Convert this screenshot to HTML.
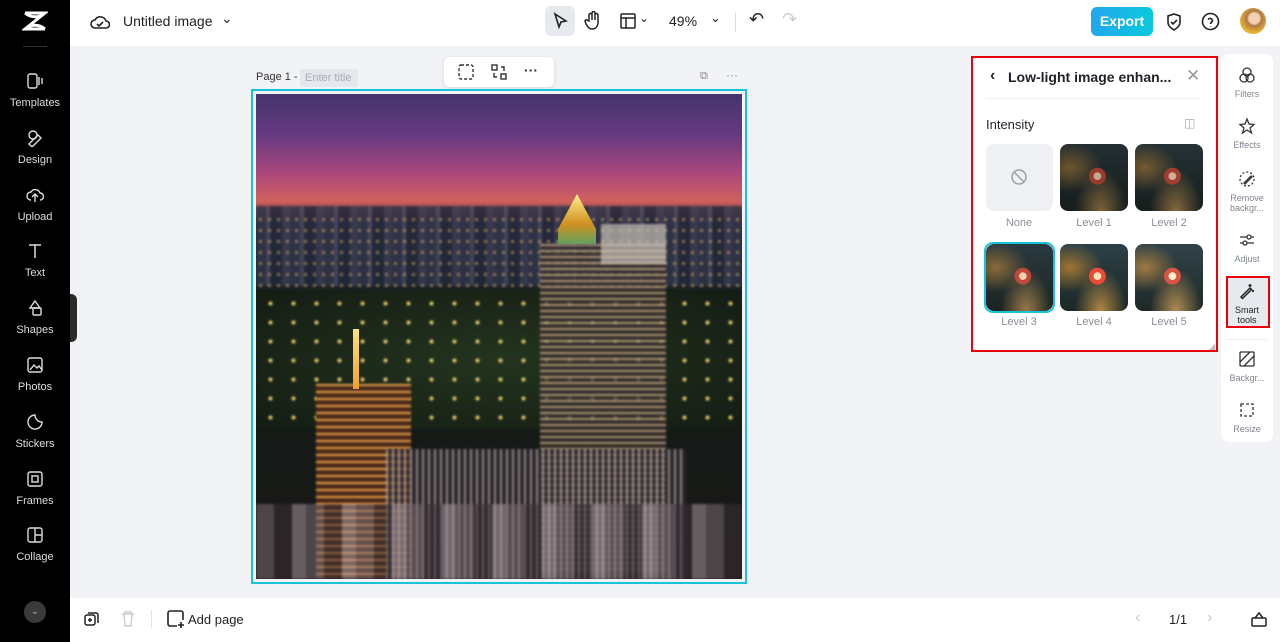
<!DOCTYPE html>
<html><head><meta charset="utf-8"><style>
*{box-sizing:border-box;margin:0;padding:0}
body{width:1280px;height:642px;overflow:hidden;font-family:"Liberation Sans",sans-serif;background:#f1f3f6;position:relative;color:#1f2329}
.abs{position:absolute}
#side{left:0;top:0;width:70px;height:642px;background:#000}
.si{position:absolute;left:0;width:70px;text-align:center;color:#ddd;font-size:11px}
.si svg{display:block;margin:0 auto 7px}
#top{left:70px;top:0;width:1210px;height:46px;background:#fff}
#bot{left:70px;top:598px;width:1210px;height:44px;background:#fff}
.rt{position:absolute;left:0;width:52px;text-align:center;font-size:9px;color:#80868f;line-height:10px}
.rt svg{display:block;margin:0 auto 5px}
.th{position:absolute;width:68px;height:67px;border-radius:8px;overflow:hidden;background:radial-gradient(circle at 55% 48%,#f4d0b0 0 7%,#c0483a 8% 16%,transparent 17%),radial-gradient(ellipse at 15% 35%,#8a6a38 0,transparent 40%),radial-gradient(ellipse at 60% 100%,#9a7a48 0,transparent 45%),linear-gradient(#2b3a40,#1a2422)}
.tl{position:absolute;width:68px;text-align:center;font-size:11px;color:#8a9099}
.bl{position:absolute;filter:blur(1px)}
</style></head><body>
<div id="side" class="abs">
 <svg class="abs" style="left:22px;top:10px" width="26" height="22" viewBox="0 0 26 22"><path d="M3 3h20L3 19h20M3 3c6 5 14 5 20 0M3 19c6-5 14-5 20 0" stroke="#fff" stroke-width="3" fill="none"/></svg>
 <div class="abs" style="left:23px;top:46px;width:24px;height:1px;background:#333"></div>
 <div class="si" style="top:72px"><svg width="18" height="18" viewBox="0 0 18 18" fill="none" stroke="#ddd" stroke-width="1.4"><rect x="2" y="2" width="9" height="14" rx="2"/><path d="M13 5v8M16 6v6"/></svg>Templates</div>
 <div class="si" style="top:129px"><svg width="18" height="18" viewBox="0 0 18 18" fill="none" stroke="#ddd" stroke-width="1.4"><circle cx="7" cy="6" r="4"/><path d="M3 15l9-9 3 3-9 9z"/></svg>Design</div>
 <div class="si" style="top:186px"><svg width="18" height="18" viewBox="0 0 18 18" fill="none" stroke="#ddd" stroke-width="1.4"><path d="M5 14a4 4 0 010-8 5 5 0 019 1 3 3 0 010 7M9 9v7M6 11l3-3 3 3"/></svg>Upload</div>
 <div class="si" style="top:242px"><svg width="18" height="18" viewBox="0 0 18 18" fill="none" stroke="#ddd" stroke-width="1.5"><path d="M3 3h12M9 3v13"/></svg>Text</div>
 <div class="si" style="top:299px"><svg width="18" height="18" viewBox="0 0 18 18" fill="none" stroke="#ddd" stroke-width="1.4"><path d="M9 2l5 7H4z"/><rect x="7" y="9" width="8" height="7" rx="1"/></svg>Shapes</div>
 <div class="si" style="top:356px"><svg width="18" height="18" viewBox="0 0 18 18" fill="none" stroke="#ddd" stroke-width="1.4"><rect x="2" y="2" width="14" height="14" rx="2"/><path d="M4 14l4-5 3 3 2-2 3 4"/></svg>Photos</div>
 <div class="si" style="top:413px"><svg width="18" height="18" viewBox="0 0 18 18" fill="none" stroke="#ddd" stroke-width="1.4"><path d="M16 9A7 7 0 119 2a7 7 0 007 7z"/></svg>Stickers</div>
 <div class="si" style="top:470px"><svg width="18" height="18" viewBox="0 0 18 18" fill="none" stroke="#ddd" stroke-width="1.4"><rect x="2" y="2" width="14" height="14" rx="2"/><rect x="6" y="6" width="6" height="6"/></svg>Frames</div>
 <div class="si" style="top:526px"><svg width="18" height="18" viewBox="0 0 18 18" fill="none" stroke="#ddd" stroke-width="1.4"><rect x="2" y="2" width="14" height="14" rx="2"/><path d="M9 2v14M9 9h7"/></svg>Collage</div>
 <div class="abs" style="left:24px;top:601px;width:22px;height:22px;border-radius:50%;background:#3a3a3a;color:#aaa;font-size:10px;text-align:center;line-height:22px">⌄</div>
</div>
<div class="abs" style="left:70px;top:294px;width:7px;height:48px;background:#2a2a2a;border-radius:0 6px 6px 0"></div>
<div id="top" class="abs">
 <svg class="abs" style="left:20px;top:13px" width="20" height="18" viewBox="0 0 20 18" fill="none" stroke="#222" stroke-width="1.6"><path d="M5 15a4 4 0 010-8 6 6 0 0111 1 3.5 3.5 0 010 7z"/><path d="M7 11l2 2 4-4"/></svg>
 <div class="abs" style="left:53px;top:13px;font-size:14px;color:#222">Untitled image</div>
 <div class="abs" style="left:151px;top:10px;font-size:14px">⌄</div>
 <div class="abs" style="left:475px;top:6px;width:30px;height:30px;border-radius:6px;background:#e6e9ee"></div>
 <svg class="abs" style="left:482px;top:12px" width="16" height="18" viewBox="0 0 16 18" fill="none" stroke="#222" stroke-width="1.6"><path d="M3 2l11 7-5 1-2 5z"/></svg>
 <svg class="abs" style="left:514px;top:11px" width="18" height="20" viewBox="0 0 18 20" fill="none" stroke="#222" stroke-width="1.5"><path d="M5 10V4a1.5 1.5 0 013 0v5-7a1.5 1.5 0 013 0v7-5a1.5 1.5 0 013 0v7c0 4-2 7-6 7-3 0-4-2-6-5l-1-3a1.3 1.3 0 012-1z"/></svg>
 <svg class="abs" style="left:550px;top:13px" width="16" height="16" viewBox="0 0 16 16" fill="none" stroke="#222" stroke-width="1.5"><rect x="1" y="1" width="14" height="14" rx="1"/><path d="M1 5h14M6 5v10"/></svg>
 <div class="abs" style="left:569px;top:11px;font-size:12px">⌄</div>
 <div class="abs" style="left:599px;top:13px;font-size:14px;color:#222">49%</div>
 <div class="abs" style="left:640px;top:10px;font-size:13px">⌄</div>
 <div class="abs" style="left:665px;top:12px;width:1px;height:20px;background:#ddd"></div>
 <div class="abs" style="left:679px;top:9px;font-size:18px;color:#222">↶</div>
 <div class="abs" style="left:712px;top:9px;font-size:18px;color:#ccc">↷</div>
 <div class="abs" style="left:1021px;top:7px;width:62px;height:29px;border-radius:6px;background:linear-gradient(90deg,#22a7ee,#0ac9dd);color:#fff;font-size:14px;font-weight:bold;text-align:center;line-height:29px">Export</div>
 <svg class="abs" style="left:1095px;top:12px" width="18" height="20" viewBox="0 0 18 20" fill="none" stroke="#222" stroke-width="1.6"><path d="M9 2l6 2v6c0 4-3 6-6 8-3-2-6-4-6-8V4z"/><path d="M6 10l2 2 4-4"/></svg>
 <svg class="abs" style="left:1131px;top:12px" width="19" height="19" viewBox="0 0 19 19" fill="none" stroke="#222" stroke-width="1.6"><circle cx="9.5" cy="9.5" r="8"/><path d="M7 7.5a2.5 2.5 0 014.5 1c0 1.5-2 2-2 3.5M9.5 14v.5"/></svg>
 <div class="abs" style="left:1170px;top:8px;width:26px;height:26px;border-radius:50%;background:radial-gradient(circle at 55% 40%,#f3d0b0 0 25%,#b07848 35%,#e8b830 70%,#c88a10)"></div>
</div>
<div class="abs" style="left:256px;top:71px;font-size:11px;color:#333">Page 1 -</div>
<div class="abs" style="left:300px;top:69px;width:58px;height:18px;background:#e4e7ec;border-radius:3px;font-size:11px;color:#aab;line-height:18px;padding-left:5px">Enter title</div>
<div class="abs" style="left:444px;top:57px;width:110px;height:30px;background:#fff;border-radius:6px;box-shadow:0 1px 4px rgba(0,0,0,.12)"></div>
<svg class="abs" style="left:458px;top:64px" width="16" height="16" viewBox="0 0 16 16" fill="none" stroke="#333" stroke-width="1.4" stroke-dasharray="3 2"><rect x="1" y="1" width="14" height="14" rx="2"/></svg>
<svg class="abs" style="left:491px;top:64px" width="16" height="16" viewBox="0 0 16 16" fill="none" stroke="#333" stroke-width="1.4"><rect x="1" y="1" width="5" height="5"/><rect x="10" y="10" width="5" height="5"/><path d="M10 3h3v4M6 13H3V9"/></svg>
<div class="abs" style="left:524px;top:62px;font-size:14px;font-weight:bold;color:#333">···</div>
<div class="abs" style="left:700px;top:70px;font-size:11px;color:#888">⧉</div>
<div class="abs" style="left:726px;top:68px;font-size:12px;color:#888">···</div>
<div class="abs" style="left:251px;top:89px;width:496px;height:495px;border:2px solid #18c3d8"></div>
<div class="abs" style="left:256px;top:94px;width:486px;height:485px;overflow:hidden;background:linear-gradient(#43346e 0%,#6a3a80 9%,#a8467c 16%,#d0605e 22%,#3a3040 27%,#1c2228 40%,#141a16 60%,#1a1818 100%)">
 <div class="bl" style="left:0;top:112px;width:486px;height:80px;background:repeating-linear-gradient(90deg,#2e3448 0 10px,#4a4860 10px 14px,#22283a 14px 26px,#3a3a52 26px 34px);opacity:.85"></div>
 <div class="bl" style="left:0;top:120px;width:486px;height:80px;background:radial-gradient(circle,#f0c060 0 1px,transparent 2px) 0 0/9px 11px;opacity:.6"></div>
 <div class="bl" style="left:0;top:195px;width:486px;height:140px;background:radial-gradient(circle,#e8d070 0 1.5px,transparent 2.5px) 3px 5px/23px 19px,radial-gradient(ellipse at 50% 50%,#24341f,#141c14)"></div>
 <div class="bl" style="left:284px;top:150px;width:126px;height:330px;background:repeating-linear-gradient(#cdb088 0 2px,#3a3030 2px 6px);opacity:.8"></div>
 <div class="abs" style="left:302px;top:100px;width:38px;height:50px;background:linear-gradient(#fff090,#d09020 60%,#60a060);clip-path:polygon(50% 0,100% 70%,100% 100%,0 100%,0 70%)"></div>
 <div class="bl" style="left:345px;top:130px;width:65px;height:40px;background:#c8c0b8;opacity:.7"></div>
 <div class="bl" style="left:60px;top:290px;width:95px;height:195px;background:repeating-linear-gradient(#e8a048 0 2px,#4a2a1a 2px 7px)"></div>
 <div class="abs" style="left:97px;top:235px;width:6px;height:60px;background:linear-gradient(#ffe080,#f0a030)"></div>
 <div class="bl" style="left:130px;top:355px;width:300px;height:130px;background:repeating-linear-gradient(90deg,#bcaaa8 0 2px,#2e2a30 2px 6px);opacity:.75"></div>
 <div class="bl" style="left:0;top:410px;width:486px;height:75px;background:repeating-linear-gradient(90deg,#7a6a72 0 18px,#3a3038 18px 36px,#a898a0 36px 50px);opacity:.55"></div>
</div>
<div class="abs" style="left:973px;top:58px;width:243px;height:292px;background:#fff;border-radius:8px"></div>
<div class="abs" style="left:971px;top:56px;width:247px;height:296px;border:2px solid #e8000b"></div>
<div class="abs" style="left:990px;top:67px;font-size:16px;font-weight:bold">‹</div>
<div class="abs" style="left:1008px;top:69px;font-size:14px;font-weight:bold;color:#1f2329">Low-light image enhan...</div>
<div class="abs" style="left:1186px;top:66px;font-size:17px;color:#999">✕</div>
<div class="abs" style="left:986px;top:98px;width:214px;height:1px;background:#eee"></div>
<div class="abs" style="left:986px;top:117px;font-size:13px;color:#1f2329">Intensity</div>
<div class="abs" style="left:1184px;top:116px;font-size:12px;color:#aaa">◫</div>
<div class="abs" style="left:986px;top:144px;width:67px;height:67px;border-radius:8px;background:#eef0f3"></div>
<svg class="abs" style="left:1010px;top:168px" width="18" height="18" viewBox="0 0 18 18" fill="none" stroke="#9aa0a8" stroke-width="1.5"><circle cx="9" cy="9" r="7"/><path d="M4 4l10 10"/></svg>
<div class="tl" style="left:985px;top:217px">None</div>
<div class="th" style="left:1060px;top:144px;filter:brightness(.8)"></div><div class="tl" style="left:1060px;top:217px">Level 1</div>
<div class="th" style="left:1135px;top:144px;filter:brightness(.85)"></div><div class="tl" style="left:1135px;top:217px">Level 2</div>
<div class="abs" style="left:984px;top:242px;width:71px;height:71px;border-radius:9px;border:2px solid #18c3d8"></div>
<div class="th" style="left:986px;top:244px;width:67px;height:67px"></div><div class="tl" style="left:985px;top:316px">Level 3</div>
<div class="th" style="left:1060px;top:244px;filter:brightness(1.1) saturate(1.2)"></div><div class="tl" style="left:1060px;top:316px">Level 4</div>
<div class="th" style="left:1135px;top:244px;filter:brightness(1.15)"></div><div class="tl" style="left:1135px;top:316px">Level 5</div>
<div class="abs" style="left:1221px;top:54px;width:52px;height:388px;background:#fff;border-radius:8px">
 <div class="rt" style="top:12px"><svg width="18" height="18" viewBox="0 0 18 18" fill="none" stroke="#333" stroke-width="1.3"><circle cx="9" cy="6" r="4"/><circle cx="6" cy="12" r="4"/><circle cx="12" cy="12" r="4"/></svg>Filters</div>
 <div class="rt" style="top:63px"><svg width="18" height="18" viewBox="0 0 18 18" fill="none" stroke="#333" stroke-width="1.3"><path d="M9 2l2 5 5 .5-4 3.5 1.5 5L9 13l-4.5 3L6 11 2 7.5 7 7z"/></svg>Effects</div>
 <div class="rt" style="top:116px"><svg width="18" height="18" viewBox="0 0 18 18" fill="none" stroke="#333" stroke-width="1.3"><circle cx="9" cy="9" r="7" stroke-dasharray="2 2"/><path d="M6 13l7-7 1 1-7 7z"/></svg>Remove<br>backgr...</div>
 <div class="rt" style="top:177px"><svg width="18" height="18" viewBox="0 0 18 18" fill="none" stroke="#333" stroke-width="1.3"><path d="M2 6h14M2 12h14"/><circle cx="11" cy="6" r="2" fill="#fff"/><circle cx="7" cy="12" r="2" fill="#fff"/></svg>Adjust</div>
 <div class="abs" style="left:5px;top:222px;width:44px;height:52px;background:#e6e9ee;border:2px solid #e8000b"></div>
 <div class="rt" style="top:228px;color:#222"><svg width="18" height="18" viewBox="0 0 18 18" fill="none" stroke="#222" stroke-width="1.5"><path d="M3 15l9-9 1.5 1.5-9 9zM12 2v3M10.5 3.5h3M15 8v2M14 9h2"/></svg>Smart<br>tools</div>
 <div class="abs" style="left:6px;top:285px;width:40px;height:1px;background:#eee"></div>
 <div class="rt" style="top:296px"><svg width="18" height="18" viewBox="0 0 18 18" fill="none" stroke="#333" stroke-width="1.3"><rect x="2" y="2" width="14" height="14" rx="1"/><path d="M2 12L12 2M6 16L16 6"/></svg>Backgr...</div>
 <div class="rt" style="top:347px"><svg width="18" height="18" viewBox="0 0 18 18" fill="none" stroke="#333" stroke-width="1.3"><rect x="3" y="3" width="12" height="12" stroke-dasharray="3 2"/></svg>Resize</div>
</div>
<div class="abs" style="left:1209px;top:342px;font-size:8px;color:#bbb">◢</div>
<div id="bot" class="abs">
 <svg class="abs" style="left:14px;top:13px" width="16" height="16" viewBox="0 0 16 16" fill="none" stroke="#222" stroke-width="1.5"><rect x="1" y="4" width="10" height="10" rx="2"/><path d="M4 2h8a2 2 0 012 2v8M6 7v4M4 9h4"/></svg>
 <svg class="abs" style="left:51px;top:13px" width="14" height="16" viewBox="0 0 14 16" fill="none" stroke="#ccc" stroke-width="1.4"><path d="M1 3h12M4 3V1h6v2M3 3l1 12h6l1-12"/></svg>
 <div class="abs" style="left:81px;top:12px;width:1px;height:18px;background:#e4e4e4"></div>
 <svg class="abs" style="left:97px;top:12px" width="18" height="18" viewBox="0 0 18 18" fill="none" stroke="#222" stroke-width="1.6"><path d="M10 16H3a2 2 0 01-2-2V3a2 2 0 012-2h11a2 2 0 012 2v7M14 12v6M11 15h6"/></svg>
 <div class="abs" style="left:118px;top:14px;font-size:13px;color:#222">Add page</div>
 <div class="abs" style="left:1065px;top:11px;font-size:16px;color:#ccc">‹</div>
 <div class="abs" style="left:1099px;top:14px;font-size:13px;color:#222">1/1</div>
 <div class="abs" style="left:1137px;top:11px;font-size:16px;color:#ccc">›</div>
 <svg class="abs" style="left:1181px;top:13px" width="16" height="16" viewBox="0 0 16 16" fill="none" stroke="#222" stroke-width="1.5"><rect x="1" y="7" width="14" height="8" rx="1"/><path d="M4 7l4-5 4 5"/></svg>
</div>
</body></html>
